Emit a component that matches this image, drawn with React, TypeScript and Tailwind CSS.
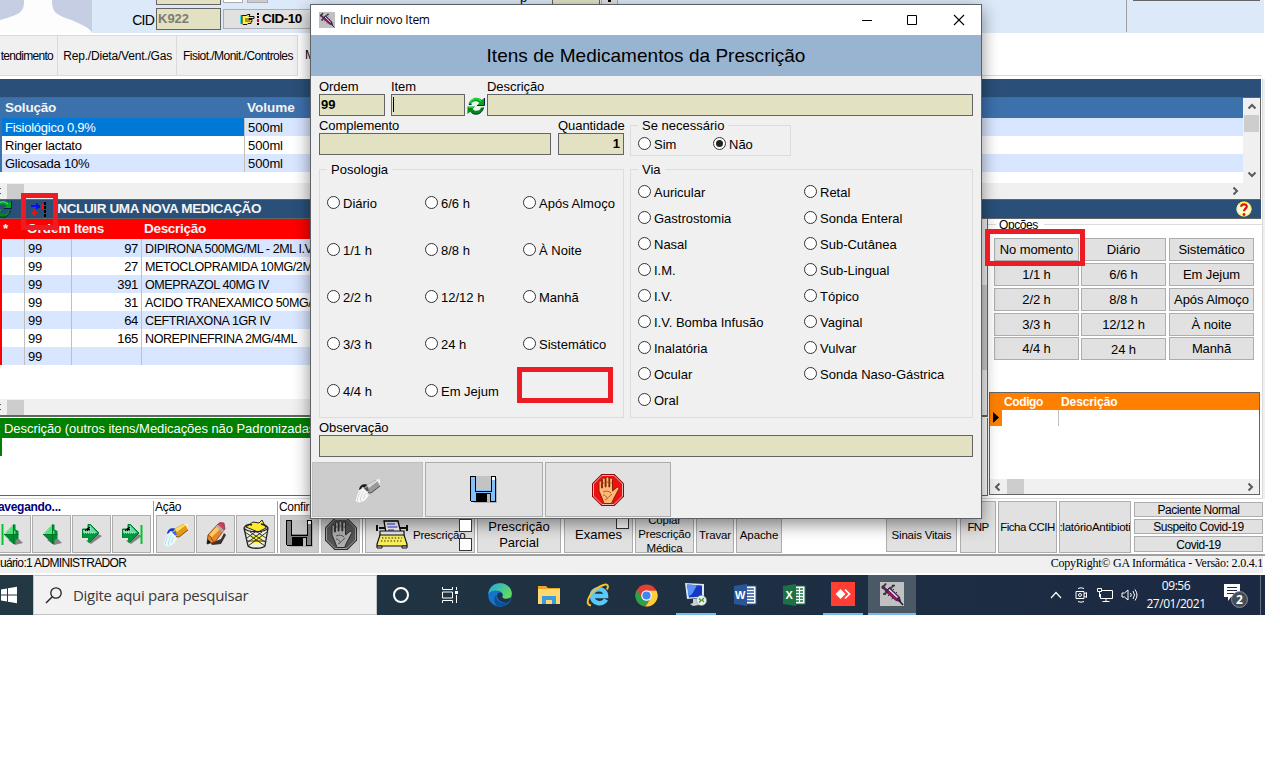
import React from "react";

const SANS = "font-['Liberation_Sans',Arial,sans-serif]";
const SEGOE = "font-['Open_Sans','Segoe_UI',sans-serif]";

type Kids = { children?: React.ReactNode; className?: string };

/* ---------- small building blocks ---------- */

function Btn({ children, className = "", tone = "border-[#adadad] bg-[#e1e1e1]" }: Kids & { tone?: string }) {
  return (
    <div className={`flex shrink-0 items-center justify-center overflow-hidden border text-center ${tone} ${className}`}>
      {children}
    </div>
  );
}

function Input({ children, className = "", color = "text-black" }: Kids & { color?: string }) {
  return (
    <div className={`h-[22px] shrink-0 border border-[#646464] bg-[#e2e2c3] px-[1px] text-[13px] leading-[20px] font-bold ${color} ${className}`}>
      {children}
    </div>
  );
}

function Radio({ label, checked = false, className = "" }: { label: string; checked?: boolean; className?: string }) {
  return (
    <div className={`flex items-center gap-[3px] leading-[18px] whitespace-nowrap ${className}`}>
      <span className="mb-[2px] flex h-[13px] w-[13px] shrink-0 items-center justify-center rounded-full border border-[#333] bg-white">
        {checked && <span className="h-[7px] w-[7px] rounded-full bg-[#222]" />}
      </span>
      <span className="pt-px">{label}</span>
    </div>
  );
}

function Group({ title, children, className = "" }: Kids & { title: string }) {
  return (
    <div className={`relative shrink-0 border border-[#dcdcdc] ${className}`}>
      <span className="absolute -top-[9px] left-[7px] bg-[#f0f0f0] px-1 leading-[18px] whitespace-nowrap">{title}</span>
      {children}
    </div>
  );
}

function Chevron({ dir, className = "" }: { dir: "up" | "down" | "left" | "right"; className?: string }) {
  const d = { up: "M1.5 6.5 5 3l3.5 3.5", down: "M1.5 3.5 5 7l3.5-3.5", left: "M6.5 1.5 3 5l3.5 3.5", right: "M3.5 1.5 7 5 3.5 8.5" }[dir];
  return (
    <svg viewBox="0 0 10 10" className={`h-[10px] w-[10px] ${className}`}>
      <path d={d} fill="none" stroke="#5a5a5a" strokeWidth="2" />
    </svg>
  );
}

/* ---------- icons ---------- */

function Refresh({ className = "" }: { className?: string }) {
  return (
    <svg viewBox="0 0 18 18" className={`h-[18px] w-[18px] shrink-0 ${className}`}>
      <path d="M1.500 7.500C2.500 3 6 .800 9 .800s4.500 1 5.500 2.200L17.500 1v7.500h-7.500l2.300-2.500C11.500 4.800 10 4.200 8.500 4.200 6 4.200 4.500 5.500 4 7.500z" fill="#00a51c" />
      <path d="M16.500 10.500c-1 4.500-4 6.700-7 6.700s-5-1-6.200-2.400L.5 17V9.500H8l-2.300 2.400c1 1.300 2.300 1.900 3.800 1.900 2.500 0 4-1.300 4.500-3.300z" fill="#008c14" />
      <path d="M2 7.500h2.500M17.500 1v7.500h-7.500M16.500 10.500C15.500 15 12.500 17.200 9.500 17.200s-4-.7-5-1.500" fill="none" stroke="#00204a" strokeWidth="1" />
      <path d="M3 5.500C4.500 2.700 7 1.700 9 1.700s4 1 5 2.500M1.500 10.200h5" fill="none" stroke="#3cf060" strokeWidth="1.100" />
    </svg>
  );
}

function Syringe({ className = "" }: { className?: string }) {
  return (
    <svg viewBox="0 0 24 24" className={`shrink-0 ${className}`}>
      <rect width="24" height="24" fill="#c0c0c0" />
      <path d="m2 4 5 5" stroke="#5c1f66" strokeWidth="2.600" />
      <path d="m2 6.500 4-5" stroke="#40303f" strokeWidth="2" />
      <path d="M4 12.500 13.500 3.500" stroke="#4a4a52" strokeWidth="2.200" />
      <path d="M12 3.500h3M3 12h3" stroke="#333" strokeWidth="1.500" />
      <path d="m5.500 9.500 4-4 10 9.500 1 4.500-4.500-1z" fill="#5b1a6b" stroke="#2c1b35" strokeWidth=".8" />
      <path d="m9 7.500 8.500 8" stroke="#efe4f4" strokeWidth="1.500" />
      <path d="m8 10 8.500 7" stroke="#c01548" strokeWidth="1.400" />
      <path d="m12 9 2-2M15 12l2-2M9.500 12.500l-1.500 1.500M13 16l-1.500 1" stroke="#3a2a48" strokeWidth="1" />
      <path d="m19 18.500 4 4.500" stroke="#1c1c1c" strokeWidth="1.500" />
    </svg>
  );
}

function NavArrow({ left = false, bar = false }: { left?: boolean; bar?: boolean }) {
  return (
    <svg viewBox="0 0 26 26" className="h-[26px] w-[26px] shrink-0">
      {left ? (
        <>
          <path d="m8 19 7 5 8-2-4-4z" fill="#848484" />
          <path d="M4 13.500 13.500 3.500h2v5l3 1.500v8l-3 1v4h-2z" fill="#008c32" />
          <path d="M4 13.500 13.500 3.500v6l2 .5v3.500z" fill="#4fe07a" />
          <path d="M4 13.500h14.500M13.500 3.500v19.500" stroke="#00742a" strokeWidth="1" />
          <path d="m5 13 8-8.500" stroke="#b4ffc4" strokeWidth="1" strokeDasharray="1 1" />
          {bar && <path d="M2.500 3v21" stroke="#00c828" strokeWidth="2" />}
        </>
      ) : (
        <>
          <path d="m7 20 5 3 11-8-4-2z" fill="#848484" />
          <path d="M3 8h6V3.500h2.500L20 12l-9 9.500H9V17H3z" fill="#00963c" />
          <path d="M4 9h6V4.500h1.500L18.500 12H4z" fill="#5fe0a0" />
          <path d="M3.500 17V8h5.500V3.500h2.500L20 12l-9 9" fill="none" stroke="#007830" strokeWidth="1" />
          <path d="M5 10h6V5M5 12h12" stroke="#c4ffe0" strokeDasharray="1 1" />
          {bar && <path d="M22.500 4v19" stroke="#00c828" strokeWidth="2" />}
        </>
      )}
    </svg>
  );
}

function Tube({ gray = false }: { gray?: boolean }) {
  return (
    <svg viewBox="0 0 28 26" className="h-[26px] w-[28px] shrink-0">
      <path d="m12 8 9-5 5-1v7l-9 7-4-2z" fill={gray ? "#9a9a9a" : "#e09a18"} />
      <path d="m13 8 8-4.500 3 .5-9 7z" fill={gray ? "#d8d8d8" : "#ffdc60"} />
      <path d="m21 2.500 5-.5v7l-2-4z" fill={gray ? "#efefef" : "#fff2a0"} />
      <path d="m14 15.500 3 .5 9-7" fill="none" stroke={gray ? "#4c4c4c" : "#8a4a00"} />
      <path d="M5 13c.5-5 4-6.500 8-5.500L11 10.500 8 10 7 13z" fill={gray ? "#1c1c1c" : "#1436c8"} />
      <path d="m10 11 3.500-1L15 14l-2 .5z" fill={gray ? "#555" : "#2a6cf0"} />
      <path d="m5 13 4-2 3 3 2 1-1 2 2 1-2 3-3 3-5 1.500L1.500 24l1-4z" fill={gray ? "#f6f6f6" : "#e9faff"} />
      <path d="M5.500 15h5M4.500 17h8M4 19h9M3 21h9M3 23h6" stroke={gray ? "#bdbdbd" : "#7fc8d8"} strokeDasharray="1 2" />
    </svg>
  );
}

function Pencil() {
  return (
    <svg viewBox="0 0 26 26" className="h-[26px] w-[26px]">
      <path d="m8 22 10-4 3-6 2 2-5 9-9 1z" fill="#3c3030" />
      <path d="m4 23 1-9L15 3l6 6-9 12z" fill="#e8862a" stroke="#7a3300" strokeWidth=".8" />
      <path d="M6 14 14 5l3 3L8 17z" fill="#ffc860" />
      <path d="m14 4 3-2.500 4 .5 1 6-3 3z" fill="#d83a58" stroke="#701a30" strokeWidth=".6" />
      <path d="m13 5 6 6.500 2-2L15 3.500z" fill="#a8b4a8" />
      <path d="m4 23 .5-5L8 21.500z" fill="#111" />
      <path d="m5 14 3 2 1 3 3 2" fill="none" stroke="#a04a10" />
    </svg>
  );
}

function Trash() {
  return (
    <svg viewBox="0 0 28 32" className="h-[32px] w-[28px]">
      <path d="m4 9 7-5 6 1 3-3 4 8-8 4z" fill="#ffe92e" stroke="#222" />
      <path d="M2 10c3 5 21 5 24 0l-3 18c-3 3-14 3-17 0z" fill="#efefdc" stroke="#222" strokeWidth="1.300" />
      <path d="M8 17h13l-2 8h-8z" fill="#ffef38" />
      <path d="m3 14 20 14M8 14l15 10M15 14l9 6M25 14 6 28M20 14 6 24M13 14l-8 6M5 23h18" stroke="#333" strokeWidth="1" />
      <path d="M2 10C4 6 8 6 10 7M19 6c4 1 6 2 7 4" stroke="#222" strokeWidth="1.500" fill="none" />
    </svg>
  );
}

function Floppy({ blue = false }: { blue?: boolean }) {
  return (
    <svg viewBox="0 0 28 28" className="h-[28px] w-[28px]" shapeRendering="crispEdges">
      <path d="M3 2h24v25H4z" fill="#a4a4a4" opacity=".8" />
      <path d="M0 0h26v26H1l-1-1z" fill="#000" />
      <path d="M1 1h24v24H1z" fill={blue ? "#7fc0ff" : "#808080"} />
      <path d="M5 1h1v14h15V1h1v15H5z" fill="#000" />
      <rect x="6" y="0" width="15" height="14" fill="#c3c3c3" />
      <rect x="6" y="17" width="15" height="9" fill="#000" />
      <rect x="17" y="18" width="3" height="8" fill="#b8b8b8" />
      <rect x="22" y="1" width="3" height="3" fill="#fff" />
    </svg>
  );
}

function StopHand({ gray = false }: { gray?: boolean }) {
  return (
    <svg viewBox="0 0 34 34" className="h-[34px] w-[34px] shrink-0">
      <path d="M10.500 1h13L33 10.500v13L23.500 33h-13L1 23.500v-13z" fill={gray ? "#2c2c2c" : "#8c0808"} />
      <path d="M11 2.500h12L31.500 11v12L23 31.500H11L2.500 23V11z" fill={gray ? "#555" : "#f01010"} stroke={gray ? "#a0a0a0" : "#e8b8b8"} strokeWidth="1" />
      <path
        d="M11 25 8 18V9.500c0-2 2.600-2 2.600 0V15h.8V6.500c0-2 2.800-2 2.800 0V14h.8V5.500c0-2 2.900-2 2.900 0V14h.8V6.500c0-2 2.800-2 2.800 0V18l3.500-3c1.500-1.500 4-.3 2.500 1.500L22.500 26l-2 4.500h-7.500z"
        fill={gray ? "#adadad" : "#ffb878"}
        stroke={gray ? "#222" : "#7a1c00"}
        strokeWidth=".9"
      />
      <path d="M12 19c3-1.500 6-1 8 1M14 27c3-1 4-4 7-6M12 22c2 0 3 1 4 3M9.500 12h1M12 10h1.500M15.500 9h2M19.500 10h1.500" fill="none" stroke={gray ? "#444" : "#b05018"} strokeWidth=".9" />
    </svg>
  );
}

function Typewriter() {
  return (
    <svg viewBox="0 0 34 30" className="h-[30px] w-[34px] shrink-0">
      <path d="m9 1h14l3 12H11z" fill="#fff" stroke="#000" strokeWidth="1.300" />
      <path d="M12 4h8M12.500 7h10M13 10h6" stroke="#2030e0" strokeWidth="1.200" />
      <path d="M4 8h6M25 8h6M2 5v6M32 5v6" stroke="#111" strokeWidth="2" />
      <path d="M5 11h24v5H5z" fill="#e8e8e8" stroke="#111" strokeWidth="1.200" />
      <path d="M5 15h24l3 9v2H2v-2z" fill="#f8ee5a" stroke="#111" strokeWidth="1.200" />
      <path d="M7 18h20M6 21h22" stroke="#1a1a1a" strokeWidth="1.200" strokeDasharray="1.300 1.900" />
      <path d="M2 26h5v2H2zM27 26h5v2h-5z" fill="#ddd" stroke="#111" />
    </svg>
  );
}

function HandPoint() {
  return (
    <svg viewBox="0 0 17 14" className="h-[14px] w-[17px] shrink-0">
      <path d="M1 3v9" stroke="#00d8e8" strokeWidth="1.500" />
      <path d="M2 3.500h4l2-1h2l-1 2h5v2H9v1h3v2h-1v2H8l-1 1H3L2 11.500z" fill="#fff04a" stroke="#111" strokeWidth="1" />
      <path d="M5 7h4M5 9h5" stroke="#111" strokeWidth=".8" />
    </svg>
  );
}

/* ---------- background application ---------- */

function HeaderBand() {
  return (
    <div className="flex h-[33px] w-[1264px] overflow-hidden bg-[#dce9f8]">
      <svg viewBox="0 0 92 33" className="h-[33px] w-[92px] shrink-0">
        <rect width="92" height="33" fill="#c5cee3" />
        <path d="M0 20C10 17 19 15 22 10c2-3 2-6 2-10h28c0 4 0 8 3 12 6 6 17 7 27 13 6 3 9 5 10 8H0z" fill="#fdfdfe" />
      </svg>
      <div className="w-[64px] shrink-0 pt-[11px] pr-[2px] text-right text-[14px] leading-[18px] tracking-[-0.8px]">CID</div>
      <div className="flex shrink-0 flex-col gap-[3px]">
        <Input className="-mt-[17px] w-[65px]" />
        <Input color="text-[#7c7c70]" className="w-[65px]">K922</Input>
      </div>
      <div className="ml-[2px] flex w-[100px] shrink-0 flex-col">
        <div className="flex h-[9px] gap-1">
          <div className="h-[3px] w-[20px] border border-t-0 border-[#adadad] bg-white" />
          <div className="h-[3px] w-[21px] border border-t-0 border-[#adadad] bg-[#ccc]" />
        </div>
        <Btn className="h-[20px] w-[100px] pl-[16px]">
          <div className="flex w-full items-center">
            <HandPoint />
            <span className="flex h-[13px] flex-col justify-between">
              <i className="h-[2px] w-[2px] bg-black" />
              <i className="h-[2px] w-[2px] bg-black" />
              <i className="h-[3px] w-[2px] bg-red-600" />
              <i className="h-[2px] w-[2px] bg-black" />
            </span>
            <span className="ml-[3px] text-[13.500px] leading-[18px] font-bold tracking-[-0.500px]">CID-10</span>
          </div>
        </Btn>
      </div>
      <div className="-mt-[8px] ml-[197px] w-[32px] shrink-0 text-[13px] leading-[12px]">p</div>
      <div className="h-[5px] w-[48px] shrink-0 border border-t-0 border-[#646464] bg-[#e2e2c3]" />
      <div className="ml-px flex h-[5px] w-[17px] shrink-0 justify-center border border-t-0 border-[#adadad] bg-[#e1e1e1]">
        <i className="h-[2px] w-[3px] bg-black" />
      </div>
      <div className="ml-auto h-[32px] w-[138px] shrink-0 border-l border-[#a0a0a0] pl-[6px]">
        <div className="h-[1px] w-[127px] bg-[#646464]" />
      </div>
    </div>
  );
}

function Tabs() {
  const tab = "flex h-[41px] items-center justify-end border-t border-r border-b border-[#dadada] bg-[#f0f0f0] pt-px pr-[4px]";
  return (
    <div className="flex h-[46px] pt-[2px] text-[12px] whitespace-nowrap">
      <div className={`${tab} w-[58px] tracking-[-0.7px]`}>tendimento</div>
      <div className={`${tab} w-[119px] tracking-[-0.200px]`}>Rep./Dieta/Vent./Gas</div>
      <div className={`${tab} w-[121px] tracking-[-0.530px]`}>Fisiot./Monit./Controles</div>
      <div className="-mt-[1px] h-[44px] w-[30px] pt-[12px] pl-[7px]">M</div>
      <div className="mt-[40px] h-px w-[934px] bg-[#dadada]" />
    </div>
  );
}

const solutions = [
  ["Fisiológico 0,9%", "500ml"],
  ["Ringer lactato", "500ml"],
  ["Glicosada 10%", "500ml"],
];

function HScroll({ children }: Kids) {
  return (
    <div className="flex h-[16px] items-center bg-[#f0f0f0]">
      <span className="flex w-[7px] flex-col gap-[4px]">
        <i className="h-px w-px bg-[#555]" />
        <i className="h-px w-px bg-[#555]" />
      </span>
      <span className="h-[15px] w-[17px] bg-[#cdcdcd]" />
      {children}
    </div>
  );
}

function SolutionTable() {
  return (
    <div className="w-[1261px]">
      <div className="h-[18px] bg-[#2a5079]" />
      <div className="flex h-[103px] border-t border-r border-b border-[#646464]">
        <div className="flex w-[1243px] flex-col">
          <div className="flex h-[20px] items-center bg-[#3d71ac] pt-px pl-[5px] text-[13.500px] font-bold text-[#f4f4f4]">
            <span className="w-[242px] tracking-[-0.200px]">Solução</span>
            <span>Volume</span>
          </div>
          {solutions.map(([name, vol], i) => (
            <div key={name} className={`flex h-[18px] border-l-2 border-[#3d71ac] leading-[19px] ${i % 2 ? "bg-white" : "bg-[#d9e6ff]"}`}>
              <span className={`w-[243px] border-r border-[#c0c0c0] pl-[3px] tracking-[-0.250px] ${i === 0 ? "bg-[#0078d7] text-white" : ""}`}>{name}</span>
              <span className="pl-[3px] tracking-[-0.100px]">{vol}</span>
            </div>
          ))}
          <div className="h-[11px] bg-white" />
          <HScroll>
            <Chevron dir="right" className="mr-[3px] ml-auto" />
          </HScroll>
        </div>
        <div className="flex grow flex-col items-center bg-[#f0f0f0]">
          <Chevron dir="up" className="mt-[4px]" />
          <div className="mt-[3px] h-[17px] w-[15px] bg-[#cdcdcd]" />
          <Chevron dir="down" className="mt-[37px]" />
        </div>
      </div>
    </div>
  );
}

const meds = [
  ["97", "DIPIRONA 500MG/ML - 2ML I.V."],
  ["27", "METOCLOPRAMIDA 10MG/2ML"],
  ["391", "OMEPRAZOL 40MG IV"],
  ["31", "ACIDO TRANEXAMICO 50MG/ML"],
  ["64", "CEFTRIAXONA 1GR IV"],
  ["165", "NOREPINEFRINA 2MG/4ML"],
  ["", ""],
];

function MedBar() {
  return (
    <div className="flex h-[19px] w-[1261px] items-center border-b border-[#646464] bg-[#2a5079] font-bold text-[#f4f4f4]">
      <Refresh className="-ml-[6px]" />
      <svg viewBox="0 0 16 15" className="ml-[18px] h-[15px] w-[16px] shrink-0" shapeRendering="crispEdges">
        <path d="M1 4h8M7 1v6M9 3v3" stroke="#0010ff" strokeWidth="2" />
        <path d="M1 11h6M4 8v6M11 3h2v3h-2" stroke="#f01010" strokeWidth="2" fill="none" />
        <path d="M15 0v15" stroke="#000" strokeWidth="2" strokeDasharray="3 1" />
      </svg>
      <span className="ml-[8px] pt-px text-[13.500px] tracking-[-0.380px]">INCLUIR UMA NOVA MEDICAÇÃO</span>
      <svg viewBox="0 0 16 16" className="mr-[9px] ml-auto h-[16px] w-[16px]">
        <circle cx="8" cy="8" r="7.600" fill="#fffcd0" />
        <circle cx="8" cy="8" r="6.800" fill="none" stroke="#f5e820" strokeWidth="1.500" strokeDasharray="1 1" />
        <path d="M5.200 5.800C5.200 2.500 10.800 2.500 10.800 5.600c0 2-2.800 2.100-2.800 4.600" fill="none" stroke="#e01010" strokeWidth="2.200" />
        <circle cx="8" cy="13.500" r="1.400" fill="#e01010" />
      </svg>
    </div>
  );
}

function MedTable() {
  return (
    <div className="flex w-[988px] shrink-0 flex-col">
      <div className="flex h-[198px] border-r border-b-2 border-[#646464]">
        <div className="flex w-[970px] flex-col">
          <div className="flex h-[20px] shrink-0 items-center bg-[red] pt-px text-[13.500px] font-bold text-[#f4f4f4]">
            <span className="w-[27px] pl-[3px]">*</span>
            <span className="w-[47px]">Ordem</span>
            <span className="w-[70px] tracking-[-0.300px]">Itens</span>
            <span className="tracking-[-0.300px]">Descrição</span>
          </div>
          {meds.map(([n, d], i) => (
            <div key={i} className={`flex h-[18px] shrink-0 border-l-2 border-[red] leading-[19px] whitespace-nowrap ${i % 2 ? "bg-white" : "bg-[#d9e6ff]"}`}>
              <span className="w-[23px] border-r border-[#c0c0c0]" />
              <span className="w-[47px] border-r border-[#c0c0c0] pl-[3px] tracking-[-0.300px]">99</span>
              <span className="w-[70px] border-r border-[#c0c0c0] pr-[3px] text-right tracking-[-0.300px]">{n}</span>
              <span className="pl-[3px] text-[12.500px] leading-[20px] tracking-[-0.400px]">{d}</span>
            </div>
          ))}
          <div className="mt-auto">
            <HScroll />
          </div>
        </div>
        <div className="flex grow flex-col bg-[#f0f0f0] pt-[66px]">
          <div className="h-[85px] bg-[#cdcdcd]" />
        </div>
      </div>
      <div className="mt-[1px] h-[78px] border-r border-b border-[#646464]">
        <div className="h-[20px] w-[970px] bg-[#008000] pl-[4px] leading-[21px] tracking-[-0.060px] whitespace-nowrap text-white">Descrição (outros itens/Medicações não Padronizadas)</div>
        <div className="h-[18px] w-[2px] bg-[#008000]" />
      </div>
    </div>
  );
}

const optionRows = [
  ["No momento", "Diário", "Sistemático"],
  ["1/1 h", "6/6 h", "Em Jejum"],
  ["2/2 h", "8/8 h", "Após Almoço"],
  ["3/3 h", "12/12 h", "À noite"],
  ["4/4 h", "24 h", "Manhã"],
];

function Options() {
  return (
    <div className="flex w-[274px] flex-col">
      <div className="flex h-[14px] items-start">
        <i className="mt-[5px] h-px w-[8px] bg-[#dcdcdc]" />
        <span className="px-[3px] text-[12px] leading-[13px] tracking-[-0.4px]">Opções</span>
        <i className="mt-[5px] ml-[3px] h-px grow bg-[#dcdcdc]" />
      </div>
      <div className="mt-[5px] flex flex-col gap-[2px] pl-[6px] tracking-[-0.100px]">
        {optionRows.map((row, i) => (
          <div key={i} className={`flex ${i === 4 ? "-mt-[1px]" : ""}`}>
            <Btn className="mr-[2px] h-[23px] w-[85px] pt-px">{row[0]}</Btn>
            <Btn className={`mr-[3px] w-[85px] pt-px ${i === 4 ? "mt-px h-[22px]" : "h-[23px]"}`}>{row[1]}</Btn>
            <Btn className="h-[23px] w-[85px] pt-px">{row[2]}</Btn>
          </div>
        ))}
      </div>
      <div className="mt-auto mb-[3px] ml-[1px] flex h-[103px] w-[271px] flex-col border border-[#646464] bg-white">
        <div className="flex h-[17px] items-center bg-[#ff8000] pl-[14px] text-[12px] font-bold tracking-[-0.100px] text-white">
          <span className="w-[57px] tracking-[-0.400px]">Codigo</span>
          <span>Descrição</span>
        </div>
        <div className="flex h-[16px]">
          <div className="w-[12px] bg-[#ff8000]">
            <svg viewBox="0 0 12 16" className="h-[16px] w-[12px]">
              <path d="m3 2 6 5.500L3 13z" fill="#000" />
            </svg>
          </div>
          <div className="w-[57px] border-r border-[#c0c0c0]" />
        </div>
        <div className="mt-auto flex h-[15px] items-center bg-[#f0f0f0]">
          <Chevron dir="left" className="ml-[3px]" />
          <span className="ml-[4px] h-[15px] w-[17px] bg-[#cdcdcd]" />
          <Chevron dir="right" className="mr-[4px] ml-auto" />
        </div>
      </div>
    </div>
  );
}

function Check({ className = "" }: { className?: string }) {
  return <span className={`h-[13px] w-[13px] border border-[#333] bg-white ${className}`} />;
}

function Toolbar() {
  const b = "h-[38px] w-[39px]";
  const dim = "border-[#bfbfbf] bg-[#ccc]";
  return (
    <div className="flex h-[57px] w-[1265px] items-start overflow-hidden border-b-2 border-[#a0a0a0] bg-white pt-[2px] text-[12px] leading-[14px]">
      <div className="w-[154px] shrink-0 border-r border-[#a0a0a0]">
        <div className="-ml-[2px] h-[14px] text-[12px] leading-[13px] font-bold tracking-[-0.300px] text-[#000080]">avegando...</div>
        <div className="-ml-[8px] flex gap-px">
          <Btn className={`${b} pl-[2px]`}><NavArrow left bar /></Btn>
          <Btn className={b}><NavArrow left /></Btn>
          <Btn className={b}><NavArrow /></Btn>
          <Btn className={b}><NavArrow bar /></Btn>
        </div>
      </div>
      <div className="w-[124px] shrink-0 border-r border-[#a0a0a0] pl-[1px]">
        <div className="h-[14px] leading-[13px] tracking-[-0.300px]">Ação</div>
        <div className="flex gap-px pl-[1px]">
          <Btn className={b}><Tube /></Btn>
          <Btn className={b}><Pencil /></Btn>
          <Btn className={b}><Trash /></Btn>
        </div>
      </div>
      <div className="w-[85px] shrink-0 border-r border-[#a0a0a0] pl-[1px]">
        <div className="h-[14px] leading-[13px] tracking-[-0.300px]">Confirm</div>
        <div className="flex gap-[2px] pl-[1px]">
          <Btn className={b} tone={dim}><Floppy /></Btn>
          <Btn className={b} tone={dim}><StopHand gray /></Btn>
        </div>
      </div>
      <Btn className="ml-[2px] h-[52px] w-[110px] justify-start pt-[15px] pl-[9px]">
        <Typewriter />
        <span className="ml-[4px] text-[11.500px] tracking-[-0.200px]">Prescrição</span>
        <span className="z-10 -ml-[6px] flex flex-col gap-[6px]">
          <Check />
          <Check />
        </span>
      </Btn>
      <Btn className="ml-[2px] h-[52px] w-[84px] px-2 pt-[15px] text-[13px] leading-[16px]">Prescrição Parcial</Btn>
      <Btn className="ml-[3px] h-[52px] w-[69px] text-[13px]">
        <span className="relative pt-[16px]">
          Exames
          <Check className="absolute top-[4px] right-[-7px]" />
        </span>
      </Btn>
      <Btn className="ml-[2px] h-[52px] w-[59px] pt-[14px] text-[11.500px] leading-[14px] tracking-[-0.200px]">Copiar<br />Prescrição<br />Médica</Btn>
      <Btn className="ml-[2px] h-[52px] w-[38px] pt-[15px] text-[11.500px] tracking-[-0.150px]">Travar</Btn>
      <Btn className="ml-[2px] h-[52px] w-[46px] pt-[15px] text-[11.500px] tracking-[-0.100px]">Apache</Btn>
      <Btn className="ml-[104px] h-[51px] w-[71px] pt-[16px] text-[11.500px] tracking-[-0.200px] whitespace-nowrap">Sinais Vitais</Btn>
      <Btn className="ml-[3px] h-[52px] w-[36px] text-[11.500px] tracking-[-0.600px]">FNP</Btn>
      <Btn className="ml-[2px] h-[52px] w-[59px] text-[11.500px] tracking-[-0.500px] whitespace-nowrap">Ficha CCIH</Btn>
      <Btn className="ml-[2px] h-[52px] w-[72px] text-[11.500px] tracking-[-0.250px] whitespace-nowrap">:latórioAntibioti</Btn>
      <div className="ml-[3px] flex flex-col gap-[2px] pt-px text-[12px] tracking-[-0.450px]">
        <Btn className="h-[15px] w-[129px] pt-[1px]">Paciente Normal</Btn>
        <Btn className="h-[15px] w-[129px] pt-[1px]">Suspeito Covid-19</Btn>
        <Btn className="h-[16px] w-[129px] pt-[1px]">Covid-19</Btn>
      </div>
    </div>
  );
}

/* ---------- taskbar ---------- */

function Slot({ children, className = "" }: Kids) {
  return <div className={`flex h-[40px] w-[49px] shrink-0 items-center justify-center ${className}`}>{children}</div>;
}

function OfficeIcon({ letter, color }: { letter: string; color: string }) {
  return (
    <svg viewBox="0 0 24 24" className="h-[24px] w-[24px]">
      <rect x="11" y="3" width="12" height="18" fill="#fff" stroke={color} />
      <path d="M14 6h7M14 9h7M14 12h7M14 15h7M14 18h7" stroke={color} strokeWidth="1.500" />
      {letter === "X" && <path d="M17.500 4v16" stroke="#fff" />}
      <path d="M1 3 14 1v22L1 21z" fill={color} />
      <text x="7.200" y="16" fontSize="11" fontWeight="bold" fontFamily="Liberation Sans" textAnchor="middle" fill="#fff">{letter}</text>
    </svg>
  );
}

function Taskbar() {
  return (
    <div className={`mt-[2px] flex h-[40px] w-[1265px] items-center bg-gradient-to-r from-[#223842] to-[#1b2942] text-white ${SEGOE}`}>
      <div className="flex w-[33px] shrink-0 items-center">
        <svg viewBox="0 0 18 18" className="h-[18px] w-[18px]">
          <path d="M1 3.500 7 2.500v6H1zM8 2.300 17 .800v7.700H8zM1 9.500h6v6l-6-1zM8 9.500h9v7.700L8 15.700z" fill="#fff" />
        </svg>
      </div>
      <div className="flex h-[40px] w-[344px] shrink-0 items-center border border-[#c4c4c4] bg-[#f2f2f2] pl-[11px]">
        <svg viewBox="0 0 18 18" className="h-[18px] w-[18px]">
          <circle cx="11" cy="7" r="5.200" fill="none" stroke="#222" strokeWidth="1.300" />
          <path d="m7 11-6 6" stroke="#222" strokeWidth="1.400" />
        </svg>
        <span className="ml-[10px] text-[15px] tracking-[-0.300px] whitespace-nowrap text-[#3a3a3a]">Digite aqui para pesquisar</span>
      </div>
      <Slot className="pr-[2px]">
        <span className="h-[16px] w-[16px] rounded-full border-2 border-white" />
      </Slot>
      <Slot className="pr-[2px]">
        <svg viewBox="0 0 18 16" className="h-[16px] w-[18px]" fill="none" stroke="#fff">
          <path d="M1.500 0v2.500h10V0M1.500 16v-2.500h10V16M1.500 5h10v6h-10zM15.500 0v3M15.500 8v8" />
          <path d="M14 5.500h3" strokeWidth="3" />
        </svg>
      </Slot>
      <Slot>
        <svg viewBox="0 0 24 24" className="h-[24px] w-[24px]">
          <defs>
            <linearGradient id="edgeA" x1="0" y1="0" x2="1" y2=".6">
              <stop offset="0" stopColor="#22a7e8" />
              <stop offset="1" stopColor="#62dc5a" />
            </linearGradient>
          </defs>
          <circle cx="12" cy="12" r="11.800" fill="#1673c8" />
          <path d="M.4 11C1 4 6 .2 12 .2c7 0 11.800 5 11.800 10.300 0 4-3 5.500-6 5.500-2.500 0-4-1-3.500-2 1.500-2 .5-5-3-6C7 6.500 2 8 .4 11z" fill="url(#edgeA)" />
          <path d="M8.500 12c-1.500 6 5 9.500 11.500 7.500-2 3-6 4.500-9 4C5 22 5.500 14 8.500 12z" fill="#0c4f9a" />
          <path d="M9 13c0-3 3-4.500 5-2.500 1 1.500.2 2.500.2 3.500.5 2 5 2.500 9 .5l-1 2.500-2 2.500C14 20.500 9.500 17 9 13z" fill="#1e3347" />
        </svg>
      </Slot>
      <Slot>
        <svg viewBox="0 0 24 22" className="h-[22px] w-[24px]">
          <path d="M1 2h8l2 2h12v16H1z" fill="#e8a825" />
          <path d="M1 5h22v15H1z" fill="#ffd970" />
          <path d="M5 12h14v8h-4v-4H9v4H5z" fill="#3a9be0" />
        </svg>
      </Slot>
      <Slot>
        <svg viewBox="0 0 24 24" className="h-[24px] w-[24px]">
          <path d="M20 16.500c-3 6-14 4.500-14-4S20 4 20 13H7" fill="none" stroke="#5cc8f8" strokeWidth="4.500" />
          <path d="M5 22.500C-3 21 5 8 14 3.500c8-4 9-1 7 3" fill="none" stroke="#f5c02c" strokeWidth="2" />
        </svg>
      </Slot>
      <Slot>
        <svg viewBox="0 0 24 24" className="h-[23px] w-[23px]">
          <circle cx="12" cy="12" r="11.500" fill="#e04335" />
          <path d="M2 6.300A11.500 11.500 0 0 0 11 23.500L16 14l-8.500 1z" fill="#2da04b" />
          <path d="M22.400 7A11.500 11.500 0 0 1 11 23.500L17 14 14 7z" fill="#fdd03b" />
          <circle cx="12" cy="12" r="5.500" fill="#fff" />
          <circle cx="12" cy="12" r="4.300" fill="#4285f4" />
        </svg>
      </Slot>
      <Slot>
        <div className="flex h-[40px] w-[40px] items-center justify-center border-b-2 border-[#76b9ed]">
          <svg viewBox="0 0 24 25" className="h-[25px] w-[24px]">
            <path d="m1 1 19 1v13.500L3 17z" fill="#dfe6ee" />
            <path d="m3 2.500 15 1v11L5 15.500z" fill="#1238c4" />
            <path d="m3 2.500 10 .7-5 9-3.500 2z" fill="#5a92f5" />
            <path d="m9 17 6-.5v4l3 2-9 1.500-3-2 3-1z" fill="#c8ced4" />
            <circle cx="17.500" cy="18.500" r="5" fill="#eef2ee" stroke="#8a9a8a" strokeWidth=".6" />
            <path d="m15 16.500 2 2-2 2M20 16l-2 2 2 2" fill="none" stroke="#3f9a2f" strokeWidth="1.300" />
          </svg>
        </div>
      </Slot>
      <Slot><OfficeIcon letter="W" color="#2a5699" /></Slot>
      <Slot><OfficeIcon letter="X" color="#1e7145" /></Slot>
      <Slot>
        <div className="flex h-[40px] w-[40px] items-center justify-center border-b-2 border-[#76b9ed]">
          <svg viewBox="0 0 24 24" className="h-[24px] w-[24px]">
            <rect width="24" height="24" fill="#ff3f34" />
            <path d="m9.500 7 5 5-5 5-5-5z" fill="#fff" />
            <path d="m14 7.500 4.500 4.500-4.500 4.500" fill="none" stroke="#fff" strokeWidth="1.700" />
          </svg>
        </div>
      </Slot>
      <div className="ml-px flex h-[40px] w-[48px] shrink-0 items-center justify-center border-b-2 border-[#76b9ed] bg-[#4b5966]">
        <Syringe className="h-[24px] w-[24px]" />
      </div>
      <div className="ml-auto flex h-[40px] items-center">
        <svg viewBox="0 0 12 8" className="h-[8px] w-[12px]">
          <path d="m1 7 5-5.500L11 7" fill="none" stroke="#fff" strokeWidth="1.200" />
        </svg>
        <svg viewBox="0 0 12 16" className="ml-[13px] h-[16px] w-[12px]" fill="none" stroke="#fff">
          <path d="M3 1.500q3-1.500 6 0M3 14.500q3 1.500 6 0M1 4.500h8v7H1zM9 7l2.500-1.500v5L9 9" />
          <circle cx="5" cy="8" r="1.500" />
        </svg>
        <svg viewBox="0 0 16 14" className="ml-[10px] h-[14px] w-[16px]" fill="none" stroke="#fff">
          <path d="M5 2.500h10.500v8H3.500V6M9 10.500v3M5.500 13.500h7" />
          <path d="M.5.500h4v3h-4zM2.500 4v5" />
        </svg>
        <svg viewBox="0 0 17 14" className="ml-[8px] h-[14px] w-[17px]" fill="none" stroke="#fff">
          <path d="M1 5h2.500L7 2v10L3.500 9H1zM9.500 5q1.500 2 0 4M12 3q3 4 0 8M14 1.500q4 5.500 0 11" />
        </svg>
        <div className="ml-[8px] w-[60px] text-center text-[12px] leading-[18px] tracking-[-0.450px]">
          <div>09:56</div>
          <div>27/01/2021</div>
        </div>
        <svg viewBox="0 0 26 28" className="ml-[17px] h-[28px] w-[26px]">
          <path d="M1 3h16v13H8l-3 4v-4H1z" fill="#fff" />
          <path d="M4 6.500h10M4 9.500h10M4 12.500h7" stroke="#1b2942" />
          <circle cx="16.500" cy="18.500" r="8" fill="#454d58" stroke="#9aa2ab" strokeWidth=".8" />
          <text x="16.500" y="23" fontSize="12" fontWeight="bold" fontFamily="Open Sans" textAnchor="middle" fill="#fff">2</text>
        </svg>
        <div className="mr-[4px] ml-[11px] h-[40px] w-px bg-[#66707e]" />
      </div>
    </div>
  );
}

/* ---------- dialog ---------- */

const dosage = [
  ["Diário", "6/6 h", "Após Almoço"],
  ["1/1 h", "8/8 h", "À Noite"],
  ["2/2 h", "12/12 h", "Manhã"],
  ["3/3 h", "24 h", "Sistemático"],
  ["4/4 h", "Em Jejum", ""],
];

const routes = [
  ["Auricular", "Retal"],
  ["Gastrostomia", "Sonda Enteral"],
  ["Nasal", "Sub-Cutânea"],
  ["I.M.", "Sub-Lingual"],
  ["I.V.", "Tópico"],
  ["I.V. Bomba Infusão", "Vaginal"],
  ["Inalatória", "Vulvar"],
  ["Ocular", "Sonda Naso-Gástrica"],
  ["Oral", ""],
];

function Labeled({ label, children, className = "" }: Kids & { label: string }) {
  return (
    <div className={`flex shrink-0 flex-col ${className}`}>
      <span className="h-[17px] leading-[19px] tracking-[-0.060px]">{label}</span>
      {children}
    </div>
  );
}

function Dialog() {
  return (
    <div className="absolute top-[4px] left-[310px] flex h-[515px] w-[672px] flex-col border border-[#5c6268] bg-[#f0f0f0] shadow-[0_5px_16px_rgba(0,0,0,0.45)]">
      <div className={`flex h-[30px] shrink-0 items-center bg-white pl-[8px] ${SEGOE}`}>
        <Syringe className="h-[16px] w-[16px]" />
        <span className="ml-[5px] text-[12px] tracking-[-0.270px]">Incluir novo Item</span>
        <svg viewBox="0 0 104 12" className="mr-[16px] ml-auto h-[12px] w-[104px]" fill="none" stroke="#000">
          <path d="M1 6.500h10M46.500 1.500h9v9h-9z" />
          <path d="m93 1 10 10M103 1 93 11" strokeWidth="1.100" />
        </svg>
      </div>
      <div className="flex h-[41px] shrink-0 items-center justify-center bg-[#99b4d1] pt-px text-[19px] tracking-[0.030px]">Itens de Medicamentos da Prescrição</div>
      <div className="flex flex-col px-[8px] pt-[1px]">
        <div className="flex">
          <Labeled label="Ordem" className="mr-[6px]"><Input className="w-[66px]">99</Input></Labeled>
          <Labeled label="Item">
            <Input className="w-[74px]"><span className="mt-[2px] block h-[15px] w-px bg-black" /></Input>
          </Labeled>
          <Refresh className="mx-[2px] mt-[20px]" />
          <Labeled label="Descrição"><Input className="w-[486px]" /></Labeled>
        </div>
        <div className="flex">
          <Labeled label="Complemento" className="mr-[7px]"><Input className="w-[232px]" /></Labeled>
          <Labeled label="Quantidade" className="mr-[6px] w-[66px]"><Input className="w-[66px] pr-[3px] text-right">1</Input></Labeled>
          <Group title="Se necessário" className="mt-[9px] flex h-[31px] w-[161px] pt-[9px] pl-[7px]">
            <Radio label="Sim" className="h-[18px] w-[75px]" />
            <Radio label="Não" checked className="h-[18px]" />
          </Group>
        </div>
        <div className="mt-[13px] flex gap-[6px]">
          <Group title="Posologia" className="flex h-[249px] w-[305px] flex-col gap-[29px] pt-[24px] pl-[7px]">
            {dosage.map((row) => (
              <div key={row[0]} className="flex">
                {row.map((label) => label && <Radio key={label} label={label} className="h-[18px] w-[98px]" />)}
              </div>
            ))}
          </Group>
          <Group title="Via" className="flex h-[249px] w-[343px] flex-col gap-[8px] pt-[13px] pl-[7px]">
            {routes.map((row) => (
              <div key={row[0]} className="flex">
                {row.map((label) => label && <Radio key={label} label={label} className="h-[18px] w-[166px]" />)}
              </div>
            ))}
          </Group>
        </div>
        <Labeled label="Observação"><Input className="w-[654px]" /></Labeled>
      </div>
      <div className="mt-[5px] flex gap-[2px] pl-[1px]">
        <Btn className="h-[55px] w-[111px]" tone="border-[#bfbfbf] bg-[#ccc]"><Tube gray /></Btn>
        <Btn className="h-[55px] w-[118px]"><Floppy blue /></Btn>
        <Btn className="h-[55px] w-[126px]"><StopHand /></Btn>
      </div>
    </div>
  );
}

export default function App() {
  return (
    <div className={`relative h-[768px] w-[1280px] overflow-hidden bg-white text-[13px] text-black ${SANS}`}>
      <HeaderBand />
      <Tabs />
      <div className="flex w-[1265px] border-r-2 border-[#efefef]">
        <div className="flex w-[1263px] flex-col border-r border-b border-[#dadada]">
          <SolutionTable />
          <MedBar />
          <div className="flex h-[279px]">
            <MedTable />
            <Options />
          </div>
        </div>
      </div>
      <Toolbar />
      <div className="flex h-[17px] w-[1263px] justify-between bg-[#f0f0f0] leading-[15px]">
        <span className="text-[12px] tracking-[-0.660px]">uário:1 ADMINISTRADOR</span>
        <span className="font-['Liberation_Serif',serif] text-[12px] tracking-[-0.230px]">CopyRight© GA Informática - Versão: 2.0.4.1</span>
      </div>
      <Taskbar />
      <Dialog />
      <div className="absolute top-[193px] left-[21px] h-[37px] w-[37px] border-[5px] border-[#ed1c24]" />
      <div className="absolute top-[229px] left-[985px] h-[37px] w-[100px] border-[5px] border-[#ed1c24]" />
      <div className="absolute top-[367px] left-[517px] h-[36px] w-[96px] border-[5px] border-[#ed1c24]" />
    </div>
  );
}
